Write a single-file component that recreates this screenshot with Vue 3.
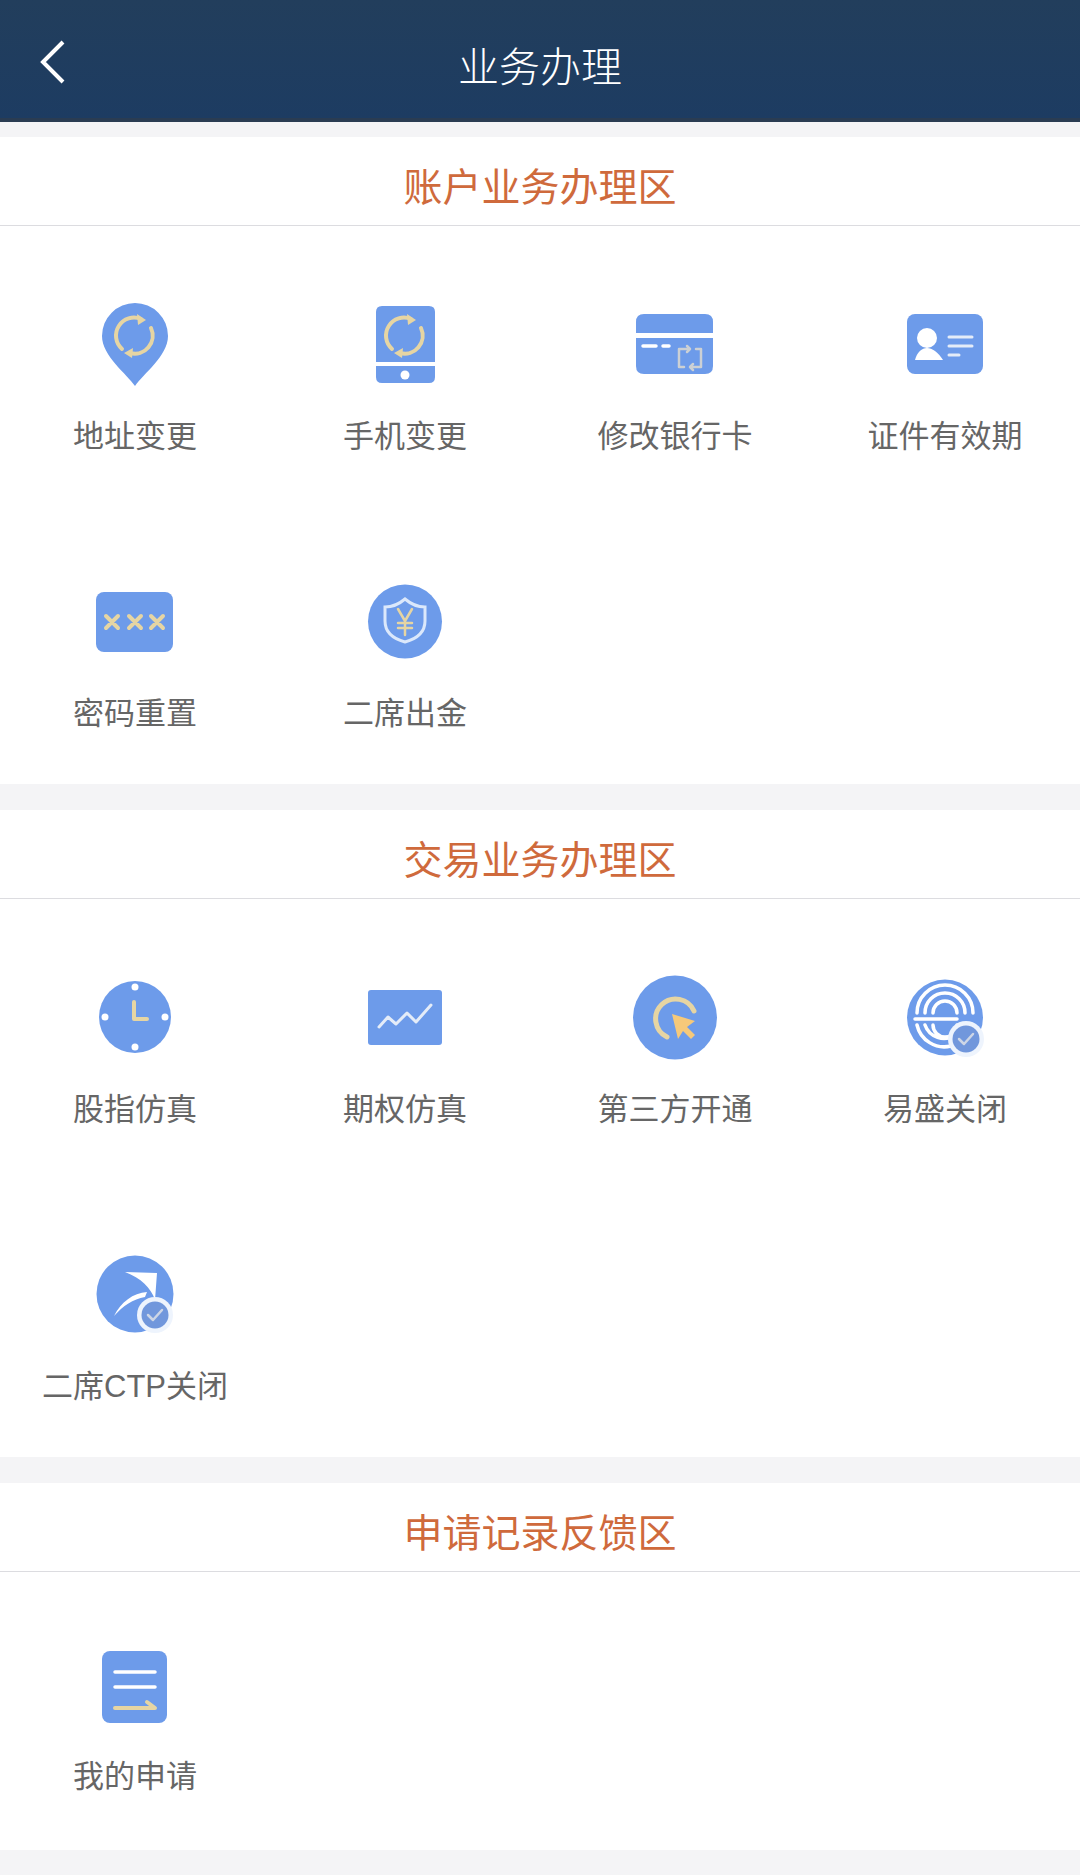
<script setup>
const sections = [
  {
    title: '账户业务办理区',
    items: [
      { name: '地址变更', icon: 'pin' },
      { name: '手机变更', icon: 'phone' },
      { name: '修改银行卡', icon: 'card' },
      { name: '证件有效期', icon: 'id' },
      { name: '密码重置', icon: 'password' },
      { name: '二席出金', icon: 'shield' }
    ]
  },
  {
    title: '交易业务办理区',
    items: [
      { name: '股指仿真', icon: 'clock' },
      { name: '期权仿真', icon: 'chart' },
      { name: '第三方开通', icon: 'cursor' },
      { name: '易盛关闭', icon: 'rings' },
      { name: '二席CTP关闭', icon: 'ctp' }
    ]
  },
  {
    title: '申请记录反馈区',
    single: true,
    items: [{ name: '我的申请', icon: 'doc' }]
  }
];
</script>

<template>
  <div class="page">
    <header class="topbar">
      <svg class="back" viewBox="0 0 26 44" width="26" height="44">
        <path d="M24 2 L4 22 L24 42" fill="none" stroke="#fff" stroke-width="4" />
      </svg>
      <h1>业务办理</h1>
    </header>

    <section v-for="section in sections" :key="section.title" class="block">
      <h2>{{ section.title }}</h2>
      <div class="grid" :class="{ single: section.single }">
        <div v-for="item in section.items" :key="item.name" class="item">
          <svg class="icon" viewBox="0 0 100 100" width="100" height="100">
            <template v-if="item.icon === 'pin' || item.icon === 'phone'">
              <path v-if="item.icon === 'pin'" class="blue" d="M50 92 C42 80 17 62 17 42 A33 33 0 0 1 83 42 C83 62 58 80 50 92Z" />
              <template v-else>
                <path class="blue" d="M27 12 H74 Q80 12 80 18 V68 H21 V18 Q21 12 27 12Z" />
                <path class="blue" d="M21 72 H80 V83 Q80 89 74 89 H27 Q21 89 21 83Z" />
                <circle cx="50" cy="81" r="4.5" fill="#fff" />
              </template>
              <path class="gold-line" d="M37 55 A18 18 0 0 1 56 25" />
              <path class="gold-fill" d="M52 20 L61 26 L53 31Z" />
              <path class="gold-line" d="M66 34 A18 18 0 0 1 45 59" />
              <path class="gold-fill" d="M48 54 L39 59 L47 64Z" />
            </template>

            <template v-else-if="item.icon === 'card'">
              <path class="blue" d="M19 20 H80 Q88 20 88 28 V39 H11 V28 Q11 20 19 20Z" />
              <path class="blue" d="M11 44 H88 V72 Q88 80 80 80 H19 Q11 80 11 72Z" />
              <path class="white-line" d="M18 52 H31 M38 52 H44" />
              <path class="grey-line" d="M63 55 H54 V73 H59 M67 73 H76 V55 H71" />
              <path class="grey-line" d="M62 52 L65 55 L62 58 M68 70 L65 73 L68 76" />
            </template>

            <template v-else-if="item.icon === 'id'">
              <rect class="blue" x="12" y="20" width="76" height="60" rx="8" />
              <circle cx="32" cy="44" r="10" fill="#fff" />
              <path d="M20 66 C22 58 27 54 32 54 C37 54 43 58 48 66Z" fill="#fff" />
              <path class="pale-line" d="M54 43 H77 M54 52 H77 M54 61 H64" />
            </template>

            <template v-else-if="item.icon === 'password'">
              <rect class="blue" x="11" y="21" width="77" height="60" rx="8" />
              <path class="gold-line" d="M21 45 L33 57 M33 45 L21 57 M44 45 L56 57 M56 45 L44 57 M66 45 L78 57 M78 45 L66 57" />
            </template>

            <template v-else-if="item.icon === 'shield'">
              <circle class="blue" cx="50" cy="50.5" r="37" />
              <path d="M50 28 C57 34 65 36 70 36 V50 C70 62 61 68 50 71 C39 68 30 62 30 50 V36 C35 36 43 34 50 28Z" fill="none" stroke="#dbe8fb" stroke-width="3" />
              <path class="gold-line thin" d="M43 38 L50 50 L57 38 M50 50 V64 M43 52 H57 M43 57 H57" />
            </template>

            <template v-else-if="item.icon === 'clock'">
              <circle class="blue" cx="50" cy="50" r="36" />
              <circle cx="50" cy="20" r="3.5" fill="#fff" />
              <circle cx="50" cy="80" r="3.5" fill="#fff" />
              <circle cx="20" cy="50" r="3.5" fill="#fff" />
              <circle cx="80" cy="50" r="3.5" fill="#fff" />
              <path class="gold-line" d="M49 35 V52 H62" />
            </template>

            <template v-else-if="item.icon === 'chart'">
              <rect class="blue" x="13" y="23" width="74" height="55" rx="3" />
              <path class="pale-line" d="M24 60 L33 50 L41 57 L52 46 L61 55 L76 38" />
            </template>

            <template v-else-if="item.icon === 'cursor'">
              <circle class="blue" cx="50" cy="50.5" r="42" />
              <path class="gold-line strong" d="M42 70 A20 20 0 1 1 69 44" />
              <path d="M47 47 L70 54 L62 60 L70 68 L66 72 L58 64 L53 72Z" fill="#f6c97a" />
            </template>

            <template v-else-if="item.icon === 'rings'">
              <circle class="blue" cx="50" cy="50.5" r="38" />
              <path class="white-line" d="M22 46 A28 28 0 0 1 78 46 M30 46 A20 20 0 0 1 70 46 M38 46 A12 12 0 0 1 62 46 M20 52 H62 M22 58 A28 28 0 0 0 56 79 M30 58 A20 20 0 0 0 60 68 M38 58 A12 12 0 0 0 62 58" />
              <circle cx="71" cy="72" r="18" fill="#eef4fd" />
              <circle cx="71" cy="72" r="13.5" fill="#7197dc" />
              <path class="check" d="M64 72 L69 77 L78 67" />
            </template>

            <template v-else-if="item.icon === 'ctp'">
              <circle class="blue" cx="50" cy="50" r="38.5" />
              <path d="M40 28 L72 29 L70 56 C66 44 56 34 40 28Z" fill="#fff" />
              <path d="M29 72 C36 58 48 49 62 48 L60 53 C48 55 38 62 29 72Z" fill="#fff" />
              <circle cx="70" cy="71" r="18" fill="#eef4fd" />
              <circle cx="70" cy="71" r="13.5" fill="#7197dc" />
              <path class="check" d="M63 71 L68 76 L77 66" />
            </template>

            <template v-else-if="item.icon === 'doc'">
              <rect class="blue" x="17" y="14" width="65" height="72" rx="8" />
              <path class="white-line" d="M30 35 H70 M30 50 H70" />
              <path class="gold-line" d="M30 71 H70 L62 65" />
            </template>
          </svg>
          <span class="label">{{ item.name }}</span>
        </div>
      </div>
    </section>
  </div>
</template>

<style>
body {
  background: #f4f4f6;
}
</style>

<style scoped>
.page {
  min-height: 1875px;
  background: #f4f4f6;
  font-family: "Liberation Sans", "Noto Sans CJK SC", sans-serif;
}

.topbar {
  position: relative;
  height: 118px;
  display: flex;
  align-items: center;
  justify-content: center;
  background: linear-gradient(180deg, #223e5c, #1d3c62);
  border-bottom: 4px solid #2a3c52;
  margin-bottom: 15px;
}

.topbar h1 {
  margin: 10px 0 0;
  font-size: 41px;
  font-weight: 300;
  color: #fff;
}

.back {
  position: absolute;
  left: 39px;
  top: 40px;
}

.block {
  background: #fff;
  margin-bottom: 26px;
}

.block h2 {
  height: 88px;
  margin: 0;
  padding-top: 6px;
  box-sizing: border-box;
  display: flex;
  align-items: center;
  justify-content: center;
  border-bottom: 1px solid #dcdce0;
  box-sizing: content-box;
  height: 82px;
  font-size: 39px;
  font-weight: 400;
  color: #cf6a3c;
}

.grid {
  display: grid;
  grid-template-columns: repeat(4, 270px);
  padding-bottom: 4px;
}

.item {
  display: flex;
  flex-direction: column;
  align-items: center;
  padding: 68px 0 46px;
}

.grid.single {
  padding-bottom: 0;
}

.grid.single .item {
  padding: 65px 0 53px;
}

.grid.single .label {
  margin-top: 20px;
}

.icon {
  display: block;
}

.label {
  margin-top: 23px;
  height: 40px;
  line-height: 40px;
  font-size: 31px;
  color: #666;
  white-space: nowrap;
}

.blue {
  fill: #6d9bea;
}

.gold-line,
.white-line,
.pale-line,
.grey-line,
.check {
  fill: none;
  stroke-linecap: round;
  stroke-linejoin: round;
}

.gold-line {
  stroke: #e6d5a3;
  stroke-width: 4;
}

.gold-line.thin {
  stroke-width: 2.5;
}

.gold-line.strong {
  stroke-width: 5;
}

.gold-fill {
  fill: #e6d5a3;
}

.white-line {
  stroke: #fff;
  stroke-width: 3.5;
}

.pale-line {
  stroke: #e4ecf8;
  stroke-width: 3;
}

.grey-line {
  stroke: #ccd0d4;
  stroke-width: 2.5;
}

.check {
  stroke: #cdd6e6;
  stroke-width: 2.5;
}
</style>
